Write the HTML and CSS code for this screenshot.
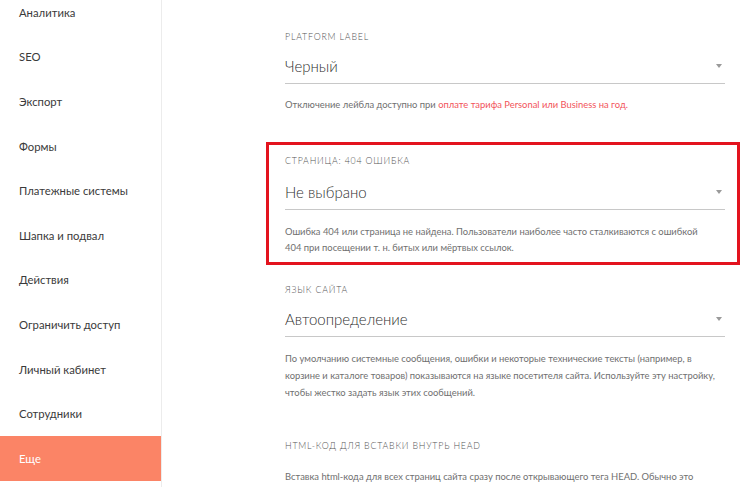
FILE: index.html
```html
<!DOCTYPE html>
<html lang="ru">
<head>
<meta charset="utf-8">
<title>Настройки сайта</title>
<link rel="stylesheet" href="styles.css">
</head>
<body>
<div class="page">
  <nav class="sidebar">
    <ul class="menu">
      <li class="menu-item">Аналитика</li>
      <li class="menu-item">SEO</li>
      <li class="menu-item">Экспорт</li>
      <li class="menu-item">Формы</li>
      <li class="menu-item">Платежные системы</li>
      <li class="menu-item">Шапка и подвал</li>
      <li class="menu-item">Действия</li>
      <li class="menu-item">Ограничить доступ</li>
      <li class="menu-item">Личный кабинет</li>
      <li class="menu-item">Сотрудники</li>
      <li class="menu-item menu-item--active">Еще</li>
    </ul>
  </nav>
  <main class="content">
    <section class="field field--first">
      <div class="field-label">Platform label</div>
      <div class="select"><span class="select-value">Черный</span><span class="select-arrow"></span></div>
      <p class="hint">Отключение лейбла доступно при <a class="hint-link" href="#">оплате тарифа Personal или Business на год.</a></p>
    </section>
    <section class="field field--marked">
      <div class="field-label">Страница: 404 ошибка</div>
      <div class="select"><span class="select-value">Не выбрано</span><span class="select-arrow"></span></div>
      <p class="hint">Ошибка 404 или страница не найдена. Пользователи наиболее часто сталкиваются с ошибкой<br>404 при посещении т. н. битых или мёртвых ссылок.</p>
    </section>
    <section class="field field--lang">
      <div class="field-label">Язык сайта</div>
      <div class="select"><span class="select-value">Автоопределение</span><span class="select-arrow"></span></div>
      <p class="hint">По умолчанию системные сообщения, ошибки и некоторые технические тексты (например, в<br>корзине и каталоге товаров) показываются на языке посетителя сайта. Используйте эту настройку,<br>чтобы жестко задать язык этих сообщений.</p>
    </section>
    <section class="field">
      <div class="field-label">HTML-код для вставки внутрь HEAD</div>
      <p class="hint hint--plain">Вставка html-кода для всех страниц сайта сразу после открывающего тега HEAD. Обычно это</p>
    </section>
  </main>
</div>
</body>
</html>
```

FILE: styles.css
```css
html, body {
  margin: 0;
  padding: 0;
  background: #ffffff;
  height: 487px;
  overflow: hidden;
}

body {
  font-family: Lato, "Noto Sans", "DejaVu Sans", sans-serif;
  color: #333333;
}

.page {
  display: flex;
  height: 487px;
}

.sidebar {
  width: 162px;
  flex: 0 0 162px;
  border-right: 1px solid #ececec;
  box-sizing: border-box;
}

.menu {
  list-style: none;
  margin: -10px 0 0 0;
  padding: 0;
}

.menu-item {
  height: 44.6px;
  display: flex;
  align-items: center;
  padding-left: 19px;
  font-size: 11.3px;
  color: #3a3a3a;
}

.menu-item--active {
  background: #fb8466;
  color: #ffffff;
  height: 45px;
}

.content {
  flex: 1;
  padding: 31px 25px 0 123px;
  box-sizing: border-box;
}

.field {
  margin-bottom: 41.5px;
}

.field--marked {
  position: relative;
  margin-bottom: 28px;
}

.field--marked::after {
  content: "";
  position: absolute;
  top: -13px;
  left: -19px;
  right: -15px;
  bottom: -9px;
  border: 3px solid #e3131e;
  pointer-events: none;
}

.field--lang {
  margin-bottom: 39px;
}

.field-label {
  font-size: 8.8px;
  line-height: 12px;
  letter-spacing: 0.8px;
  text-transform: uppercase;
  color: #555555;
  font-weight: 300;
}

.select {
  display: flex;
  align-items: center;
  justify-content: space-between;
  height: 34px;
  margin-top: 6px;
  border-bottom: 1px solid #c8c8c8;
}

.field--marked .select {
  margin-top: 7px;
  height: 35px;
}

.select-value {
  font-size: 15px;
  font-weight: 300;
  color: #2f2f2f;
}

.select-arrow {
  width: 0;
  height: 0;
  margin-right: 3px;
  border-left: 3px solid transparent;
  border-right: 3px solid transparent;
  border-top: 4px solid #9a9a9a;
}

.hint {
  margin: 13px 0 0 0;
  font-size: 9.4px;
  line-height: 16.5px;
  color: #707070;
  white-space: nowrap;
}

.field--marked .hint {
  margin-top: 14px;
  line-height: 16px;
}

.field--lang .hint {
  line-height: 17px;
}

.hint--plain {
  margin-top: 17px;
}

.hint-link {
  color: #f2545b;
  text-decoration: none;
}
```
